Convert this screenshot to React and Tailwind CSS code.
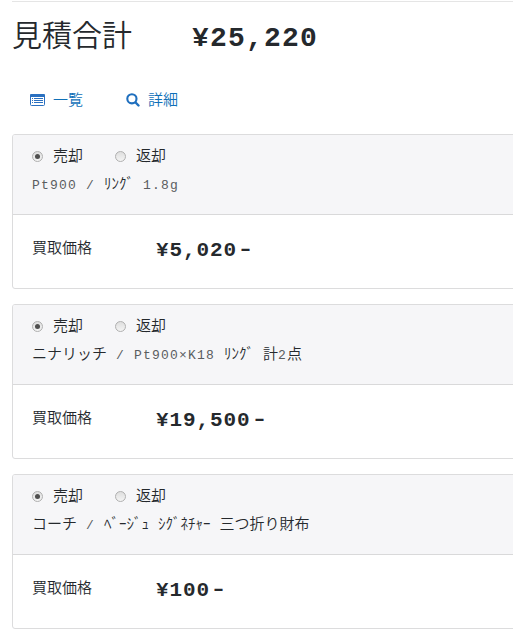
const items = [
  { id: 1, name: ['Pt900 / ', 'ﾘﾝｸﾞ', ' 1.8g'], price: '¥5,020' },
  { id: 2, name: ['', 'ニナリッチ', ' / Pt900×K18 ', 'ﾘﾝｸﾞ', ' ', '計', '2', '点'], price: '¥19,500' },
  { id: 3, name: ['', 'コーチ', ' / ', 'ﾍﾞｰｼﾞｭ', ' ', 'ｼｸﾞﾈﾁｬｰ', ' ', '三つ折り財布'], price: '¥100' },
];

function Radio({ checked }) {
  return (
    <span className="flex size-[11px] items-center justify-center rounded-full border border-[#b0b0b0] bg-gradient-to-b from-[#dedede] to-[#f4f4f4]">
      {checked && <span className="size-[5px] rounded-full bg-[#4f4f4f]" />}
    </span>
  );
}

function ListIcon() {
  return (
    <svg className="mb-[5px] h-[12px] w-[15px]" viewBox="0 0 15 12" fill="none">
      <rect x="0.5" y="0.5" width="14" height="11" rx="1" stroke="#2a70c0" />
      <path d="M0 1.2Q0 0 1.2 0H13.8Q15 0 15 1.2V3H0Z" fill="#2a70c0" />
      <path d="M2 4.5h1M4 4.5H13M2 6.5h1M4 6.5H13M2 8.5h1M4 8.5H13" stroke="#2a70c0" />
    </svg>
  );
}

function SearchIcon() {
  return (
    <svg className="mb-[5px] size-[14px]" viewBox="0 0 14 14" fill="none" stroke="#1f6fbe" strokeLinecap="round">
      <circle cx="5.9" cy="5.8" r="4.6" strokeWidth="2.1" />
      <path d="M9.6 9.5L12.5 12.5" strokeWidth="2.4" />
    </svg>
  );
}

// Half-width Latin runs alternate with Japanese runs, starting with Latin.
function ItemName({ parts }) {
  return (
    <div className="h-7 pt-[2px] leading-7 whitespace-pre">
      {parts.map((part, i) =>
        i % 2 === 0 ? (
          <span key={i} className="text-[13px] tracking-[1.2px] text-[#5a5d60]">{part}</span>
        ) : (
          <span key={i}>{part}</span>
        ),
      )}
    </div>
  );
}

function ItemCard({ item }) {
  return (
    <section className="h-[155px] w-[520px] shrink-0 overflow-hidden rounded-[3px] border border-[#dcdcdd]">
      <header className="h-[80px] border-b border-[#d9d9da] bg-[#f6f6f8] pt-[7px] pl-[19px]">
        <div className="flex h-7 items-center">
          <Radio checked />
          <span className="ml-[10px] pt-1">売却</span>
          <span className="ml-[32px]"><Radio /></span>
          <span className="ml-[10px] pt-1">返却</span>
        </div>
        <ItemName parts={item.name} />
      </header>
      <div className="flex pt-[21px] pl-[19px]">
        <span className="w-[124px] pt-[2px] leading-6">買取価格</span>
        <span className="flex items-center text-[21px] leading-[30px] font-bold tracking-[0.9px]">
          {item.price}<span className="origin-left scale-x-[1.35] scale-y-[0.85]">-</span>
        </span>
      </div>
    </section>
  );
}

export default function App() {
  return (
    <main className="h-[637px] w-[513px] overflow-hidden bg-white pl-3 font-['Liberation_Mono','Noto_Sans_CJK_JP',monospace] text-[15px] font-[350] text-[#25292d]">
      <div className="mt-px h-px bg-[#e5e5e5]" />
      <div className="flex h-[68px] items-center">
        <h1 className="w-[180px] pt-1 text-[30px] leading-[40px]">見積合計</h1>
        <strong className="pt-[5px] text-[28px] leading-[40px] font-bold tracking-[1.2px]">¥25,220</strong>
      </div>
      <nav className="flex h-[64px] items-center pl-[18px] text-[#0f70b8]">
        <a className="flex items-center gap-[8px]"><ListIcon />一覧</a>
        <a className="ml-[43px] flex items-center gap-[8px]"><SearchIcon />詳細</a>
      </nav>
      <div className="flex flex-col gap-[15px]">
        {items.map((item) => <ItemCard key={item.id} item={item} />)}
      </div>
    </main>
  );
}
